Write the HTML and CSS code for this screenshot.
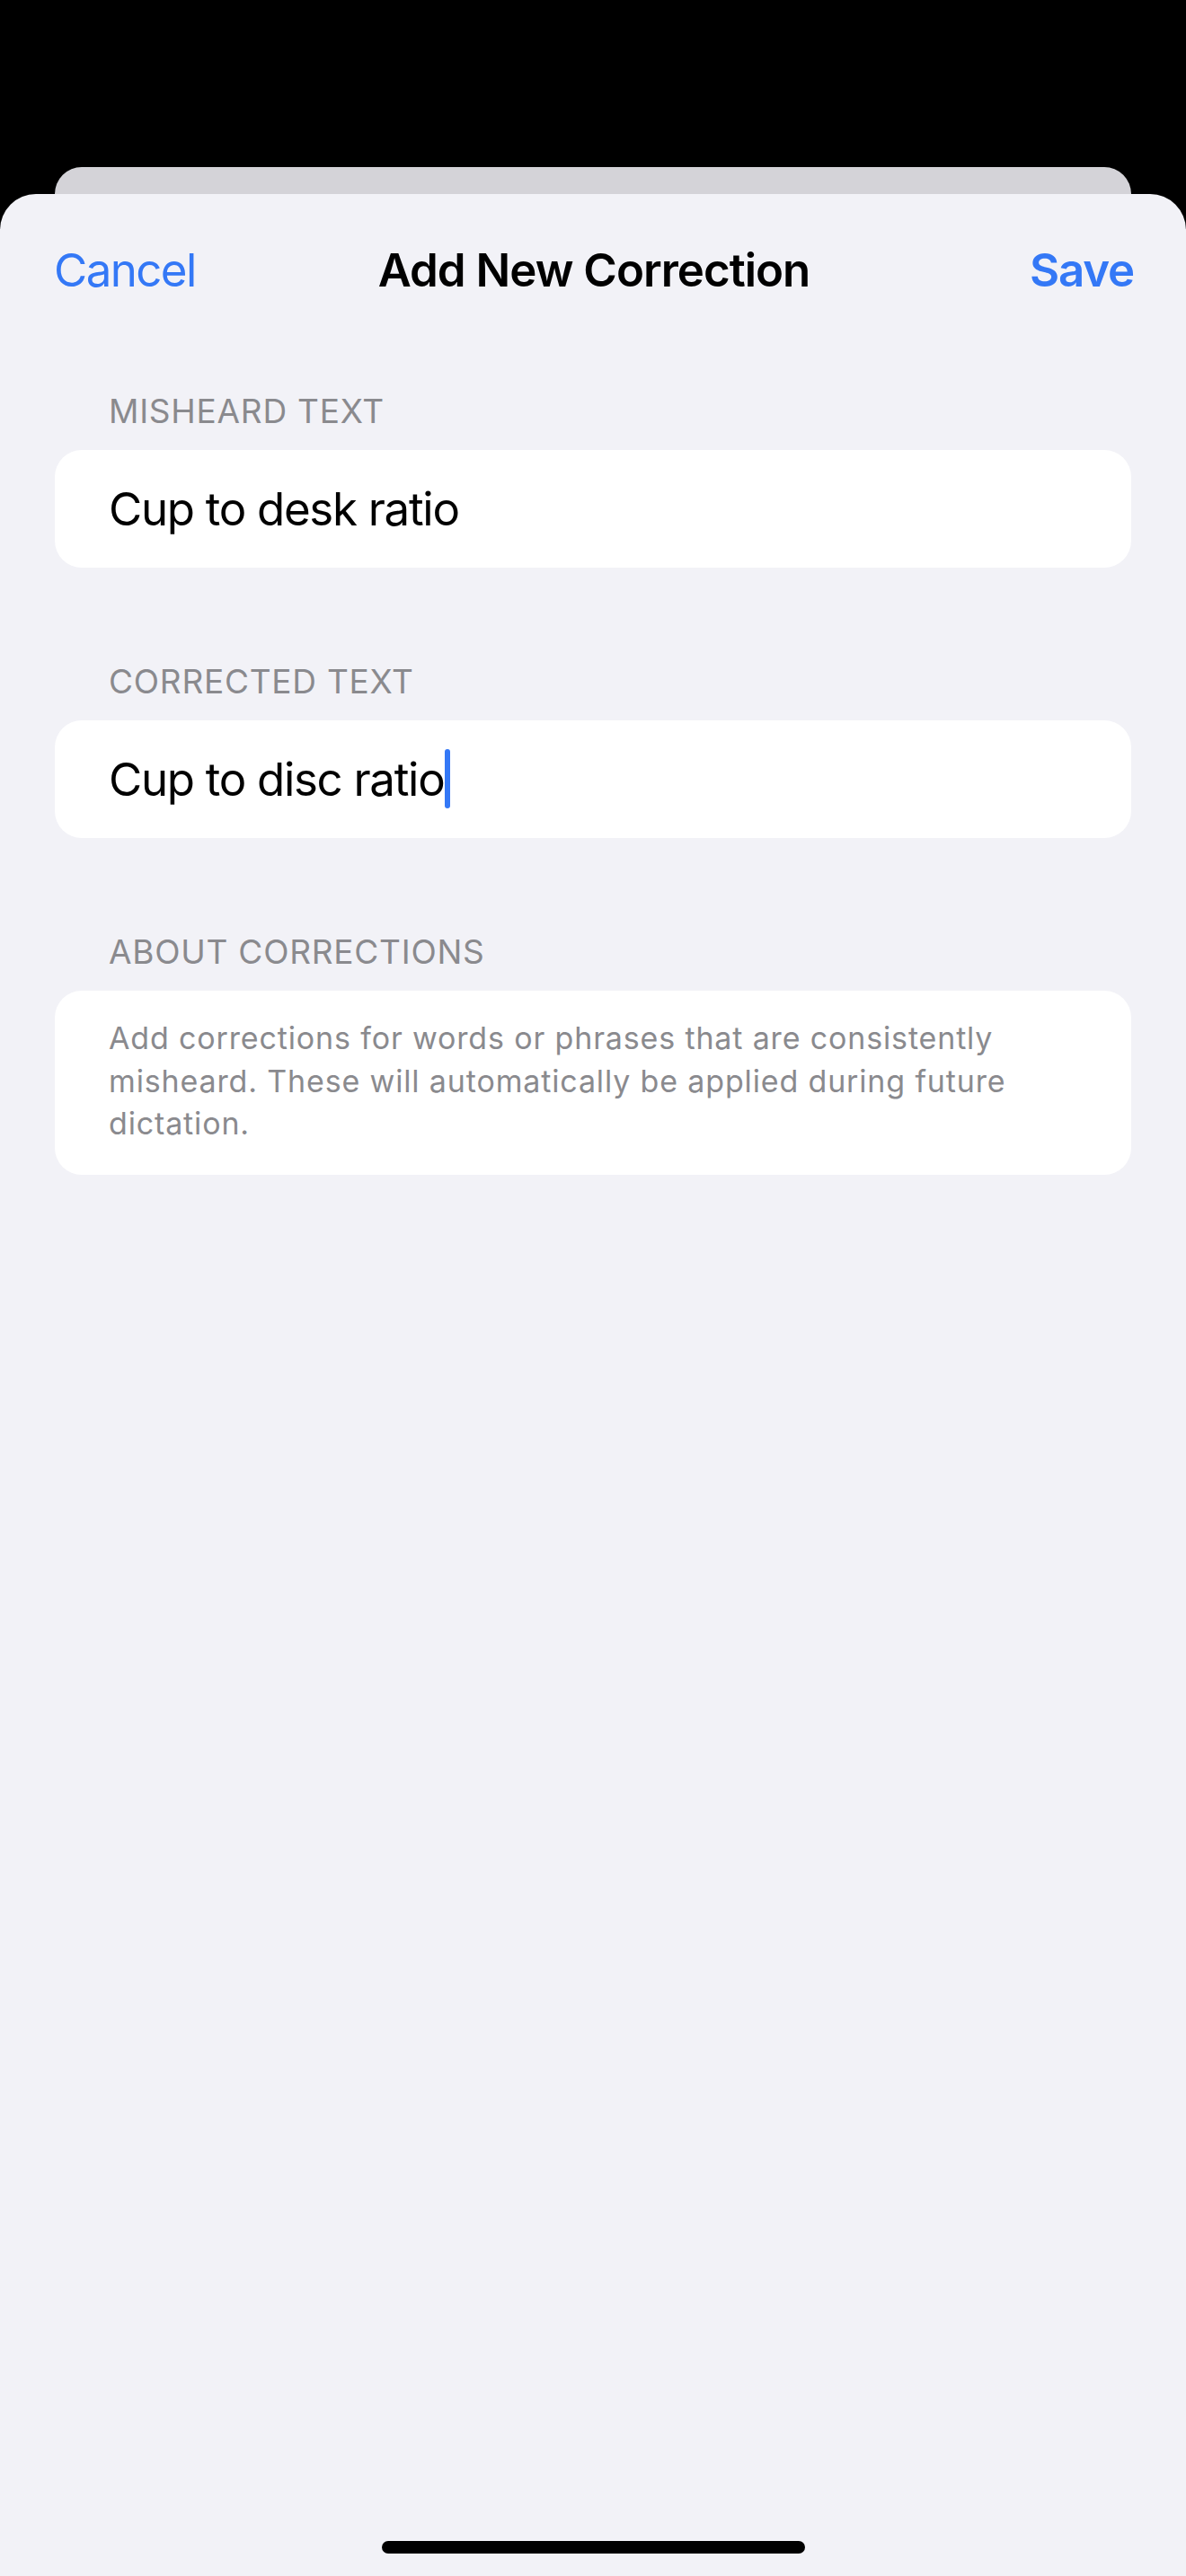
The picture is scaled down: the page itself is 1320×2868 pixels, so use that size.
FILE: index.html
```html
<!DOCTYPE html>
<html lang="en">
<head>
<meta charset="utf-8">
<title>Add New Correction</title>
<link rel="stylesheet" href="styles.css">
</head>
<body>
<div class="screen">
  <div class="back-card"></div>
  <div class="sheet">
    <header class="nav">
      <span class="nav-btn cancel">Cancel</span>
      <span class="nav-title">Add New Correction</span>
      <span class="nav-btn save">Save</span>
    </header>

    <section class="group">
      <div class="group-label">MISHEARD TEXT</div>
      <div class="field">Cup to desk ratio</div>
    </section>

    <section class="group">
      <div class="group-label">CORRECTED TEXT</div>
      <div class="field">Cup to disc ratio<span class="caret"></span></div>
    </section>

    <section class="group">
      <div class="group-label">ABOUT CORRECTIONS</div>
      <div class="note">Add corrections for words or phrases that are consistently misheard. These will automatically be applied during future dictation.</div>
    </section>

    <div class="home-indicator"></div>
  </div>
</div>
</body>
</html>
```

FILE: styles.css
```css
html, body {
  margin: 0;
  padding: 0;
  background: #000;
}

.screen {
  width: 1320px;
  height: 2868px;
  background: #000;
  padding-top: 186px;
  box-sizing: border-box;
  font-family: "Inter", "Noto Sans", "Liberation Sans", sans-serif;
  overflow: hidden;
}

.back-card {
  margin: 0 61px;
  height: 30px;
  background: #d4d3d8;
  border-radius: 30px 30px 0 0;
}

.sheet {
  height: 2652px;
  background: #f2f2f7;
  border-radius: 40px 40px 0 0;
  padding-top: 54px;
  box-sizing: border-box;
  display: flex;
  flex-direction: column;
}

.nav {
  display: grid;
  grid-template-columns: 1fr auto 1fr;
  align-items: center;
  padding: 0 58px 0 60px;
  font-size: 51px;
  line-height: 62px;
}

.nav-btn {
  color: #3478f6;
}

.cancel {
  justify-self: start;
  letter-spacing: -1.6px;
}

.save {
  justify-self: end;
  font-weight: 600;
  letter-spacing: -1.2px;
}

.nav-title {
  color: #000;
  font-weight: 600;
  letter-spacing: -1px;
}

.group {
  margin-top: 102px;
  display: flex;
  flex-direction: column;
  gap: 20px;
}

.group + .group {
  margin-top: 103px;
}

.group-label {
  padding: 0 121px;
  font-size: 37px;
  line-height: 47px;
  color: #8a8a8e;
  letter-spacing: 0.75px;
}

.field {
  margin: 0 61px;
  height: 131px;
  background: #fff;
  border-radius: 30px;
  padding: 0 60px;
  font-size: 51px;
  line-height: 131px;
  color: #000;
  letter-spacing: -1.3px;
}

.caret {
  display: inline-block;
  width: 6px;
  height: 66px;
  background: #3478f6;
  border-radius: 3px;
  vertical-align: -14px;
  margin-left: 1px;
}

.note {
  margin: 0 61px;
  background: #fff;
  border-radius: 30px;
  padding: 29px 61px 33px 60px;
  font-size: 34px;
  line-height: 47.5px;
  color: #8a8a8e;
  letter-spacing: 0.85px;
}

.home-indicator {
  margin: auto auto 25px;
  width: 471px;
  height: 14px;
  border-radius: 7px;
  background: #000;
}
```
